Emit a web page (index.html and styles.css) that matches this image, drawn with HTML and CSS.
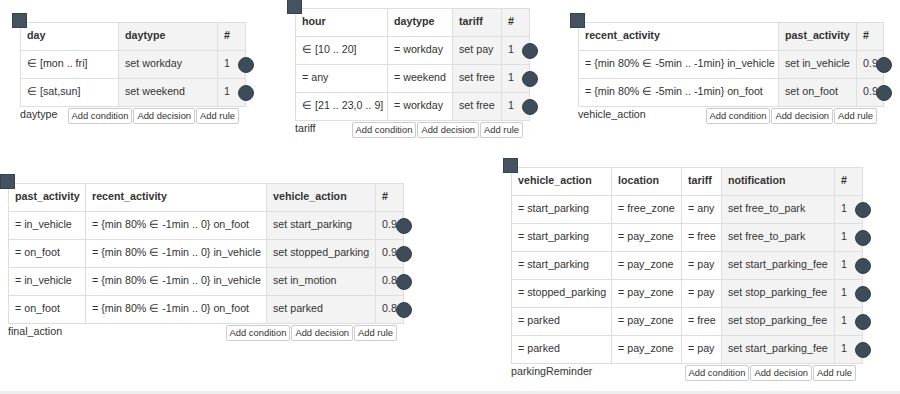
FILE: index.html
```html
<!DOCTYPE html>
<html>
<head>
    <title>Decision tables</title>
    <link rel="stylesheet" href="styles.css">
</head>
<body>
    <div class="canvas">

        <!-- daytype -->
        <div class="node" id="daytype">
            <div class="handle"></div>
            <table class="dt">
                <colgroup><col width="98"><col width="99"><col width="28"></colgroup>
                <thead>
                    <tr><th>day</th><th class="out">daytype</th><th class="out">#</th></tr>
                </thead>
                <tbody>
                    <tr><td>∈ [mon .. fri]</td><td class="out">set workday</td><td class="out num">1<span class="dot"></span></td></tr>
                    <tr><td>∈ [sat,sun]</td><td class="out">set weekend</td><td class="out num">1<span class="dot"></span></td></tr>
                </tbody>
            </table>
            <div class="node-foot">
                <span class="node-name">daytype</span>
                <div class="actions">
                    <button>Add condition</button><button>Add decision</button><button>Add rule</button>
                </div>
            </div>
        </div>

        <!-- tariff -->
        <div class="node" id="tariff">
            <div class="handle"></div>
            <table class="dt">
                <colgroup><col width="92"><col width="65"><col width="49"><col width="28"></colgroup>
                <thead>
                    <tr><th>hour</th><th>daytype</th><th class="out">tariff</th><th class="out">#</th></tr>
                </thead>
                <tbody>
                    <tr><td>∈ [10 .. 20]</td><td>= workday</td><td class="out">set pay</td><td class="out num">1<span class="dot"></span></td></tr>
                    <tr><td>= any</td><td>= weekend</td><td class="out">set free</td><td class="out num">1<span class="dot"></span></td></tr>
                    <tr><td>∈ [21 .. 23,0 .. 9]</td><td>= workday</td><td class="out">set free</td><td class="out num">1<span class="dot"></span></td></tr>
                </tbody>
            </table>
            <div class="node-foot">
                <span class="node-name">tariff</span>
                <div class="actions">
                    <button>Add condition</button><button>Add decision</button><button>Add rule</button>
                </div>
            </div>
        </div>

        <!-- vehicle_action -->
        <div class="node" id="vehicle-action">
            <div class="handle"></div>
            <table class="dt">
                <colgroup><col width="200"><col width="78"><col width="27"></colgroup>
                <thead>
                    <tr><th>recent_activity</th><th class="out">past_activity</th><th class="out">#</th></tr>
                </thead>
                <tbody>
                    <tr><td>= {min 80% ∈ -5min .. -1min} in_vehicle</td><td class="out">set in_vehicle</td><td class="out num">0.9<span class="dot"></span></td></tr>
                    <tr><td>= {min 80% ∈ -5min .. -1min} on_foot</td><td class="out">set on_foot</td><td class="out num">0.9<span class="dot"></span></td></tr>
                </tbody>
            </table>
            <div class="node-foot">
                <span class="node-name">vehicle_action</span>
                <div class="actions">
                    <button>Add condition</button><button>Add decision</button><button>Add rule</button>
                </div>
            </div>
        </div>

        <!-- final_action -->
        <div class="node" id="final-action">
            <div class="handle"></div>
            <table class="dt">
                <colgroup><col width="77"><col width="181"><col width="109"><col width="28"></colgroup>
                <thead>
                    <tr><th>past_activity</th><th>recent_activity</th><th class="out">vehicle_action</th><th class="out">#</th></tr>
                </thead>
                <tbody>
                    <tr><td>= in_vehicle</td><td>= {min 80% ∈ -1min .. 0} on_foot</td><td class="out">set start_parking</td><td class="out num">0.9<span class="dot"></span></td></tr>
                    <tr><td>= on_foot</td><td>= {min 80% ∈ -1min .. 0} in_vehicle</td><td class="out">set stopped_parking</td><td class="out num">0.9<span class="dot"></span></td></tr>
                    <tr><td>= in_vehicle</td><td>= {min 80% ∈ -1min .. 0} in_vehicle</td><td class="out">set in_motion</td><td class="out num">0.8<span class="dot"></span></td></tr>
                    <tr><td>= on_foot</td><td>= {min 80% ∈ -1min .. 0} on_foot</td><td class="out">set parked</td><td class="out num">0.8<span class="dot"></span></td></tr>
                </tbody>
            </table>
            <div class="node-foot">
                <span class="node-name">final_action</span>
                <div class="actions">
                    <button>Add condition</button><button>Add decision</button><button>Add rule</button>
                </div>
            </div>
        </div>

        <!-- parkingReminder -->
        <div class="node" id="parking-reminder">
            <div class="handle"></div>
            <table class="dt">
                <colgroup><col width="100"><col width="70"><col width="40"><col width="113"><col width="28"></colgroup>
                <thead>
                    <tr><th>vehicle_action</th><th>location</th><th>tariff</th><th class="out">notification</th><th class="out">#</th></tr>
                </thead>
                <tbody>
                    <tr><td>= start_parking</td><td>= free_zone</td><td>= any</td><td class="out">set free_to_park</td><td class="out num">1<span class="dot"></span></td></tr>
                    <tr><td>= start_parking</td><td>= pay_zone</td><td>= free</td><td class="out">set free_to_park</td><td class="out num">1<span class="dot"></span></td></tr>
                    <tr><td>= start_parking</td><td>= pay_zone</td><td>= pay</td><td class="out">set start_parking_fee</td><td class="out num">1<span class="dot"></span></td></tr>
                    <tr><td>= stopped_parking</td><td>= pay_zone</td><td>= pay</td><td class="out">set stop_parking_fee</td><td class="out num">1<span class="dot"></span></td></tr>
                    <tr><td>= parked</td><td>= pay_zone</td><td>= free</td><td class="out">set stop_parking_fee</td><td class="out num">1<span class="dot"></span></td></tr>
                    <tr><td>= parked</td><td>= pay_zone</td><td>= pay</td><td class="out">set start_parking_fee</td><td class="out num">1<span class="dot"></span></td></tr>
                </tbody>
            </table>
            <div class="node-foot">
                <span class="node-name">parkingReminder</span>
                <div class="actions">
                    <button>Add condition</button><button>Add decision</button><button>Add rule</button>
                </div>
            </div>
        </div>

    </div>
    <div class="bottom-bar"></div>
</body>
</html>
```

FILE: styles.css
```css
body { margin: 0; font-family: "Liberation Sans", Arial, sans-serif; color: #333; background: #fff; }
.canvas { position: relative; height: 391px; overflow: hidden; }
.bottom-bar { height: 3px; background: #eee; }

/* nodes sit on a free canvas, positions are the content */
.node { position: absolute; }
#daytype { left: 20px; top: 22px; }
#tariff { left: 295px; top: 8px; }
#vehicle-action { left: 578px; top: 22px; }
#final-action { left: 8px; top: 183px; }
#parking-reminder { left: 511px; top: 167px; }

.handle { position: absolute; left: -8px; top: -9px; width: 13px; height: 13px;
          background: #45525f; border: 1px solid #37424d; z-index: 2; }

/* width 1px + fixed layout: table grows to the sum of its <col> widths */
.dt { border-collapse: collapse; table-layout: fixed; width: 1px; font-size: 10.7px; }
.dt th, .dt td { border: 1px solid #dedede; padding: 5px 6px 8px; line-height: 14px;
                 text-align: left; white-space: nowrap; }
.dt th { font-weight: bold; }
.dt .out { background: #f3f3f3; }
.dt td.num { position: relative; }
.dot { position: absolute; right: -9px; top: 50%; margin-top: -8px; width: 14px; height: 14px;
       border-radius: 50%; background: #3e4b58; border: 1px solid #334049; }

.node-foot { display: flex; align-items: flex-start; }
.node-name { flex: 1; font-size: 10.7px; line-height: 13px; padding-top: 1px; }
.actions { display: flex; gap: 1px; margin: 1px 7px 0 0; }
.actions button { font: 9.4px "Liberation Sans", Arial, sans-serif; line-height: 10px; padding: 2px 3px;
                  background: #fff; color: #333; border: 1px solid #ccc; border-radius: 2px; cursor: pointer; }
```
